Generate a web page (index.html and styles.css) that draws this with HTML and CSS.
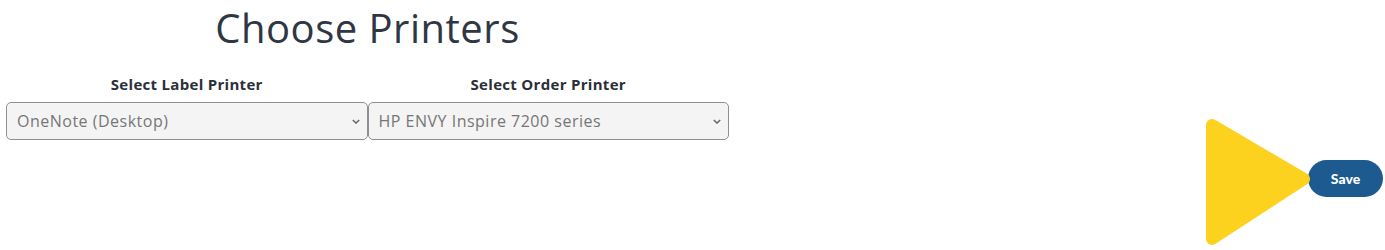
FILE: index.html
```html
<!DOCTYPE html>
<html>
<head>
<meta charset="utf-8">
<link rel="stylesheet" href="styles.css">
</head>
<body>
<div class="page">
  <div class="panel">
    <h1 class="title">Choose Printers</h1>
    <div class="columns">
      <div class="col">
        <label class="label">Select Label Printer</label>
        <div class="select"><span>OneNote (Desktop)</span><svg class="chev" viewBox="0 0 10 6" width="8" height="5"><path d="M1 1 L5 5 L9 1" fill="none" stroke="#666" stroke-width="1.8"/></svg></div>
      </div>
      <div class="col">
        <label class="label">Select Order Printer</label>
        <div class="select"><span>HP ENVY Inspire 7200 series</span><svg class="chev" viewBox="0 0 10 6" width="8" height="5"><path d="M1 1 L5 5 L9 1" fill="none" stroke="#666" stroke-width="1.8"/></svg></div>
      </div>
    </div>
  </div>
  <div class="actions">
    <button class="save">Save</button>
  </div>
  <svg class="pointer" viewBox="0 0 110 130" width="110" height="130"><path d="M8 8 L100 62 L8 122 Z" fill="#fdd21f" stroke="#fdd21f" stroke-width="12" stroke-linejoin="round"/></svg>
</div>
</body>
</html>
```
FILE: styles.css
```css
html, body {
  margin: 0;
  padding: 0;
  background: #ffffff;
}
.page {
  position: relative;
  width: 1385px;
  height: 250px;
  font-family: "Open Sans", Lato, sans-serif;
}
.panel {
  width: 723px;
  padding-left: 6px;
}
.title {
  margin: 0;
  padding-top: 3px;
  text-align: center;
  font-size: 40px;
  letter-spacing: 0.5px;
  font-weight: 400;
  color: #2f3644;
  line-height: 50px;
}
.columns {
  display: flex;
  margin-top: 22px;
}
.col {
  flex: 1;
  display: flex;
  flex-direction: column;
  align-items: center;
}
.label {
  font-size: 15px;
  letter-spacing: 0.3px;
  font-weight: 700;
  color: #2b2f38;
  line-height: 18px;
}
.select {
  margin-top: 9px;
  box-sizing: border-box;
  width: 100%;
  height: 38px;
  border: 1px solid #8f8f8f;
  border-radius: 5px;
  background: #f4f4f4;
  display: flex;
  align-items: center;
  justify-content: space-between;
  padding: 0 7px 0 10px;
  font-size: 16px;
  letter-spacing: 0.5px;
  color: #767676;
}
.chev {
  display: block;
}
.actions {
  display: flex;
  justify-content: flex-end;
  padding-right: 2px;
  margin-top: 20px;
}
.save {
  width: 75px;
  height: 37px;
  border: none;
  border-radius: 19px;
  background: #1d5a8f;
  color: #ffffff;
  font-family: Lato, sans-serif;
  font-weight: 900;
  font-size: 14px;
}
.pointer {
  position: absolute;
  left: 1204px;
  top: 117px;
}
```
